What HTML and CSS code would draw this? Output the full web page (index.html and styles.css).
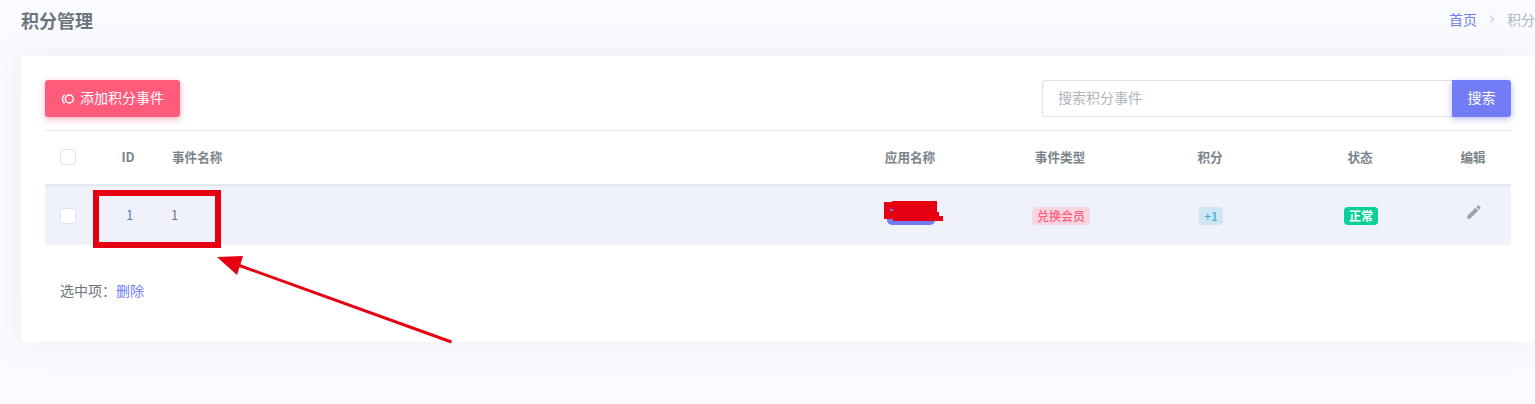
FILE: index.html
```html
<!DOCTYPE html>
<html lang="zh-CN">
<head>
<meta charset="utf-8">
<title>积分管理</title>
<link rel="stylesheet" href="styles.css">
</head>
<body>
<div class="page">
  <header class="page-title-box">
    <h1 class="page-title">积分管理</h1>
    <nav class="breadcrumb">
      <a class="crumb-link">首页</a>
      <svg class="crumb-sep" viewBox="0 0 8 10"><path d="M2 1.5 5.5 5 2 8.5" fill="none" stroke="currentColor" stroke-width="1.4"/></svg>
      <span class="crumb-current">积分管理</span>
    </nav>
  </header>
  <main class="card">
    <div class="toolbar">
      <button class="btn-add">
        <svg class="btn-icon" viewBox="0 0 14 12"><circle cx="8.3" cy="6" r="4" fill="none" stroke="currentColor" stroke-width="1.5"/><path d="M3.6 1.6A5.6 5.6 0 0 0 3.6 10.4" fill="none" stroke="currentColor" stroke-width="1.4"/></svg>
        <span class="btn-label">添加积分事件</span>
      </button>
      <form class="search">
        <input class="search-input" type="text" placeholder="搜索积分事件">
        <button class="search-btn" type="button"><span class="btn-label">搜索</span></button>
      </form>
    </div>
    <div class="table">
      <div class="row head">
        <div class="cell center"><input class="check" type="checkbox"></div>
        <div class="cell center">ID</div>
        <div class="cell name">事件名称</div>
        <div class="cell center">应用名称</div>
        <div class="cell center">事件类型</div>
        <div class="cell center">积分</div>
        <div class="cell center">状态</div>
        <div class="cell center">编辑</div>
      </div>
      <div class="row body">
        <div class="cell center"><input class="check" type="checkbox"></div>
        <div class="cell center id">1</div>
        <div class="cell name-val">1</div>
        <div class="cell center shifted"><span class="badge app">应用</span></div>
        <div class="cell center shifted"><span class="badge pink">兑换会员</span></div>
        <div class="cell center shifted"><span class="badge blue">+1</span></div>
        <div class="cell center shifted"><span class="badge green">正常</span></div>
        <div class="cell center shifted">
          <svg class="pencil" viewBox="0 0 24 24"><path fill="currentColor" d="M20.71,7.04C21.1,6.65 21.1,6 20.71,5.63L18.37,3.29C18,2.9 17.35,2.9 16.96,3.29L15.12,5.12L18.87,8.87M3,17.25V21H6.75L17.81,9.93L14.06,6.18L3,17.25Z"/></svg>
        </div>
      </div>
    </div>
    <p class="selected">选中项：<a class="delete">删除</a></p>
  </main>
  <svg class="annotation" viewBox="0 0 1535 404">
    <rect x="96" y="193" width="122" height="52" fill="none" stroke="#e60012" stroke-width="6"/>
    <path d="M451.5 342 238 265" fill="none" stroke="#e60012" stroke-width="3"/>
    <path d="M217 257 243 256 237 275Z" fill="#e60012"/>
    <path d="M884 202H892V201H937V212H939V216H943V221H893V219H884Z" fill="#e60012"/>
    <rect x="890" y="209" width="3" height="2" fill="#727cf5"/>
  </svg>
</div>
</body>
</html>
```
FILE: styles.css
```css
* { box-sizing: border-box; }
html, body { margin: 0; height: 100%; }
body {
  background: #fafbfe;
  color: #6c757d;
  font-family: "Noto Sans CJK SC", "Noto Sans", sans-serif;
  font-size: 14px;
  overflow: hidden;
}
.page {
  position: relative;
  width: 1535px;
  height: 404px;
  padding-left: 21px;
  overflow: hidden;
}
.page-title-box {
  display: flex;
  justify-content: space-between;
  align-items: center;
  height: 56px;
  padding-bottom: 16px;
  margin-right: -28px;
}
.page-title {
  margin: 0;
  font-size: 18px;
  font-weight: 700;
  line-height: 40px;
  color: #6c757d;
}
.breadcrumb {
  display: flex;
  align-items: center;
  gap: 10px;
  line-height: 20px;
  padding-bottom: 2px;
}
.crumb-link { color: #727cf5; }
.crumb-sep { width: 8px; height: 10px; color: #ced4da; margin-right: 1px; margin-left: 1px; }
.crumb-current { color: #adb5bd; }
.card {
  height: 286px;
  padding: 24px 24px 0;
  background: #fff;
  border-radius: 4px;
  box-shadow: 0 0 35px rgba(154, 161, 171, .15);
}
.toolbar {
  display: flex;
  justify-content: space-between;
  align-items: flex-start;
  height: 51px;
  border-bottom: 1px solid #e3eaef;
}
.btn-add {
  display: flex;
  align-items: center;
  gap: 5px;
  width: 135px;
  height: 37px;
  padding: 0 0 0 16px;
  border: 0;
  border-radius: 3px;
  background: #ff5b7b;
  color: #fff;
  font: inherit;
  box-shadow: 0 2px 6px rgba(250, 92, 124, .5);
}
.btn-icon { width: 14px; height: 12px; }
.btn-label { display: block; padding-bottom: 3px; }
.search { display: flex; width: 469px; height: 37px; margin: 0; }
.search-input {
  flex: 1;
  min-width: 0;
  padding: 0 15px 3px;
  border: 1px solid #dee2e6;
  border-right: 0;
  border-radius: 4px 0 0 4px;
  color: #6c757d;
  font: inherit;
  outline: 0;
}
.search-input::placeholder { color: #adb5bd; opacity: 1; }
.search-btn {
  width: 59px;
  padding: 0;
  border: 0;
  border-radius: 0 3px 3px 0;
  background: #727cf5;
  color: #fff;
  font: inherit;
  box-shadow: 0 2px 6px rgba(114, 124, 245, .5);
}
.row {
  display: grid;
  grid-template-columns: 53px 60px 677px 150px 150px 150px 150px 76px;
  align-items: center;
}
.head {
  height: 55px;
  padding-bottom: 2px;
  border-bottom: 2px solid #e3eaef;
  font-size: 12.6px;
  font-weight: 700;
  color: #7b848b;
}
.body { height: 59px; background: #eff2fa; }
.cell { min-width: 0; }
.center { display: flex; justify-content: center; align-items: center; }
.row .center:first-child { justify-content: flex-start; padding-left: 15px; }
.shifted { padding-left: 2px; }
.id { padding-left: 3px; padding-bottom: 2px; color: #5585ad; font-size: 13px; }
.name { padding-left: 14px; }
.name-val { padding-left: 13px; padding-bottom: 2px; color: #86716a; font-size: 13px; }
.check {
  appearance: none;
  display: block;
  width: 16px;
  height: 16px;
  margin: 0;
  background: #fff;
  border: 1px solid #dee2e6;
  border-radius: 3px;
}
.badge {
  display: inline-block;
  height: 18px;
  padding: 0 5px;
  border-radius: 4px;
  font-size: 12px;
  font-weight: 500;
  line-height: 18px;
}
.app { width: 48px; background: #727cf5; color: #727cf5; border-radius: 5px; }
.pink { background: #f9d5e0; color: #fa5c7c; }
.blue { background: #cfe5f2; color: #39afd1; width: 24px; text-align: center; }
.green { background: #0acf97; color: #fff; font-weight: 700; width: 34px; text-align: center; }
.pencil { display: block; width: 18px; height: 18px; color: #98a6ad; margin-top: -8px; }
.selected { margin: 35px 0 0 15px; line-height: 20px; }
.delete { color: #727cf5; }
.annotation {
  position: absolute;
  left: 0;
  top: 0;
  width: 1535px;
  height: 404px;
  pointer-events: none;
}
```
